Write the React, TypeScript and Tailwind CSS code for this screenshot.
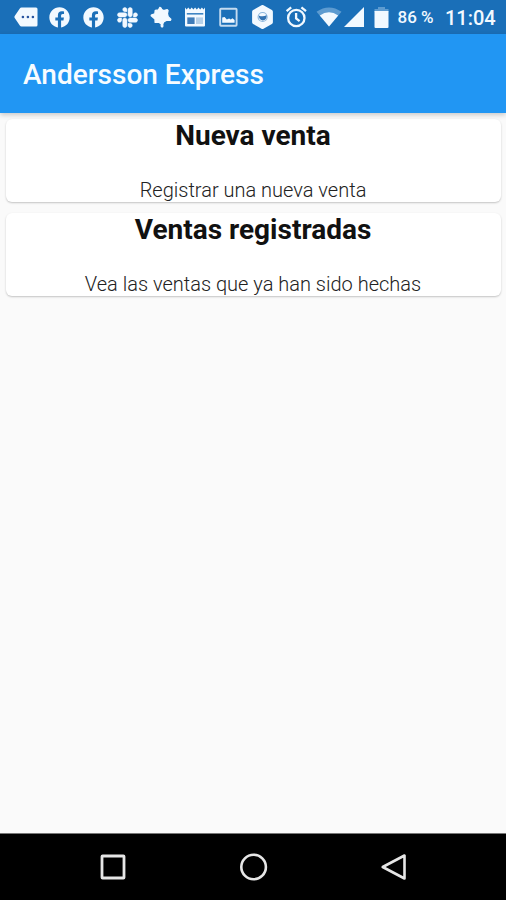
import type { ReactNode } from "react";
import { FaFacebook, FaSlack } from "react-icons/fa";

const menu = [
  { title: "Nueva venta", description: "Registrar una nueva venta" },
  {
    title: "Ventas registradas",
    description: "Vea las ventas que ya han sido hechas",
  },
];

const StatusIcon = ({ children }: { children: ReactNode }) => (
  <div className="flex h-6 w-6 shrink-0 items-center justify-center">
    {children}
  </div>
);

const StatusBar = () => (
  <div className="flex h-[34px] shrink-0 items-center bg-[#1a6fb8] pl-3.5 text-[#f2f9ff]">
    <div className="flex gap-[9.8px]">
      {/* Messages */}
      <StatusIcon>
        <svg viewBox="0 0 24 24" className="h-6 w-6" fill="currentColor">
          <path d="M7.5 2.5H22Q23.5 2.5 23.5 4V20Q23.5 21.5 22 21.5H7.5Q6.4 21.5 5.8 20.6L.7 13Q0 12 .7 11L5.8 3.4Q6.4 2.5 7.5 2.5Z" />
          <g fill="#2855a0">
            <circle cx="8.9" cy="12" r="1.3" />
            <circle cx="13.9" cy="12" r="1.3" />
            <circle cx="18.9" cy="12" r="1.3" />
          </g>
        </svg>
      </StatusIcon>
      <StatusIcon>
        <FaFacebook size={21} />
      </StatusIcon>
      <StatusIcon>
        <FaFacebook size={21} />
      </StatusIcon>
      <StatusIcon>
        <FaSlack size={23} stroke="currentColor" strokeWidth={10} />
      </StatusIcon>
      {/* Splat */}
      <StatusIcon>
        <svg
          viewBox="0 0 24 24"
          className="h-6 w-6"
          fill="currentColor"
          stroke="currentColor"
          strokeWidth="1.4"
          strokeLinejoin="round"
        >
          <path d="M10.8 2.5Q12 2.2 12.8 4.6L14.6 5.6L18.2 4.8L19 5.6L18.4 8.6L19.2 11.8L21.8 14.2L21.4 15.4L17.2 15.4L14.6 17L13.6 19.2Q14.2 21.9 13 21.9Q11.9 21.7 12.4 19L9.8 17.2L6.2 17.4L6 14L4.2 12.4L2.2 10.8L2.6 9.9L5.8 9L6.3 5.4L9.4 5Z" />
        </svg>
      </StatusIcon>
      {/* News */}
      <StatusIcon>
        <svg viewBox="0 0 24 24" className="h-6 w-6">
          <path
            d="M2 2.6l1.6 1.8 1.7-1.8 1.7 1.8 1.7-1.8 1.7 1.8 1.7-1.8 1.7 1.8 1.7-1.8 1.7 1.8 1.7-1.8 1.6 1.8 1.5-1.8V20.5Q22 21.5 21 21.5H3Q2 21.5 2 20.5Z"
            fill="currentColor"
          />
          <path d="M3.8 8H20.3V9.6H3.8Z" fill="#3f85c4" />
          <path d="M4.3 12.4H11.6V19H4.3Z" fill="#3f7cb9" />
          <path d="M13 12.4H20V19H13Z" fill="#b7d1e9" />
        </svg>
      </StatusIcon>
      {/* Picture */}
      <StatusIcon>
        <svg viewBox="0 0 24 24" className="h-6 w-6">
          <rect
            x="3.2"
            y="3.7"
            width="16.4"
            height="17"
            rx=".8"
            fill="none"
            stroke="#c4dbf0"
            strokeWidth="1.9"
          />
          <path
            d="M5.2 17.8V12.6L7.6 11.9L9.8 14.4L12.1 13.6L13.8 14.6L15.4 13.3L17.6 15.1V17.8Z"
            fill="currentColor"
          />
        </svg>
      </StatusIcon>
      {/* Hexagon */}
      <StatusIcon>
        <svg viewBox="0 0 24 24" className="h-6 w-6">
          <path
            d="M11.5 2L19.9 6.8V17.2L11.5 22L3.1 17.2V6.8Z"
            fill="currentColor"
            stroke="currentColor"
            strokeWidth="4"
            strokeLinejoin="round"
          />
          <circle
            cx="11.6"
            cy="12"
            r="4.5"
            fill="none"
            stroke="#8db7dd"
            strokeWidth="1.2"
          />
          <path
            d="M7.8 10.4Q11.6 12.2 15.6 10.2Q15.8 15.2 11.8 15.4Q8.2 15 7.8 10.4Z"
            fill="#3273b3"
          />
        </svg>
      </StatusIcon>
      {/* Alarm */}
      <StatusIcon>
        <svg
          viewBox="0 0 24 24"
          className="h-6 w-6"
          fill="none"
          stroke="currentColor"
          strokeWidth="2.3"
        >
          <circle cx="12.3" cy="13" r="8.2" />
          <path d="M12.1 8V13.5L15.6 16.2M2.6 6.2L7.2 2.4M22 6.2L17.4 2.4" />
        </svg>
      </StatusIcon>
    </div>

    {/* Wifi */}
    <svg viewBox="0 0 26 20" className="ml-[7.6px] h-5 w-[26px]">
      <path d="M.5 4.7Q13-3.9 25.5 4.7L13 19.5Z" fill="#5d9bd0" />
      <path d="M3.8 8.4Q13 2.3 22.2 8.4L13 19.5Z" fill="currentColor" />
    </svg>
    {/* Signal */}
    <svg viewBox="0 0 20 20" className="ml-0.5 h-5 w-5" fill="currentColor">
      <path d="M20 0V20H0Z" />
    </svg>
    {/* Battery */}
    <svg viewBox="0 0 15 21" className="ml-[10.5px] h-[21px] w-[15px]">
      <path d="M4 0H11V2H14.5V5H.5V2H4Z" fill="#5d9bd0" />
      <path
        d="M.5 4H14.5V20Q14.5 21 13.5 21H1.5Q.5 21 .5 20Z"
        fill="currentColor"
      />
    </svg>
    <span className="ml-2 w-[37px] pt-0.5 text-[17px] font-medium whitespace-nowrap">
      86 %
    </span>
    <span className="ml-[10.5px] pt-0.5 text-xl font-medium whitespace-nowrap">
      11:04
    </span>
  </div>
);

const NavigationBar = () => (
  <div className="flex h-[67px] shrink-0 items-center justify-center gap-[112px] border-t border-[#777] bg-black pb-px pl-px text-[#e6e6e6]">
    <svg viewBox="0 0 28 28" className="h-7 w-7" fill="none" stroke="currentColor">
      <rect x="2" y="3" width="22" height="22" rx=".6" strokeWidth="2.8" />
    </svg>
    <svg viewBox="0 0 28 28" className="h-7 w-7" fill="none" stroke="currentColor">
      <circle cx="13.6" cy="14" r="12.3" strokeWidth="2.6" />
    </svg>
    <svg viewBox="0 0 28 28" className="h-7 w-7" fill="none" stroke="currentColor">
      <path d="M24.5 2.5V25.5L2.7 14Z" strokeWidth="2.6" strokeLinejoin="round" />
    </svg>
  </div>
);

const App = () => {
  return (
    <div className="flex h-[900px] w-[506px] flex-col overflow-hidden bg-[#fafafa] font-['Roboto',sans-serif]">
      <StatusBar />
      <header className="z-10 flex h-[79px] shrink-0 items-center bg-[#2196f3] pl-[23px] shadow-[0_2px_5px_rgba(0,0,0,0.2)]">
        <h1 className="pt-[3px] text-[28px] font-medium text-[#f7fcff]">
          Andersson Express
        </h1>
      </header>
      <main className="flex flex-1 flex-col gap-[11px] pt-1.5 pr-[5px] pl-1.5">
        {menu.map((item) => (
          <button
            key={item.title}
            type="button"
            className="flex h-[83px] w-full flex-col items-center justify-between rounded-md bg-white pr-px text-[#111] shadow-[0_1px_2px_rgba(0,0,0,0.22)]"
          >
            <span className="text-[28px] leading-[33px] font-bold">
              {item.title}
            </span>
            <span className="text-xl leading-[24px] font-light text-[#222]">
              {item.description}
            </span>
          </button>
        ))}
      </main>
      <NavigationBar />
    </div>
  );
};

export default App;
